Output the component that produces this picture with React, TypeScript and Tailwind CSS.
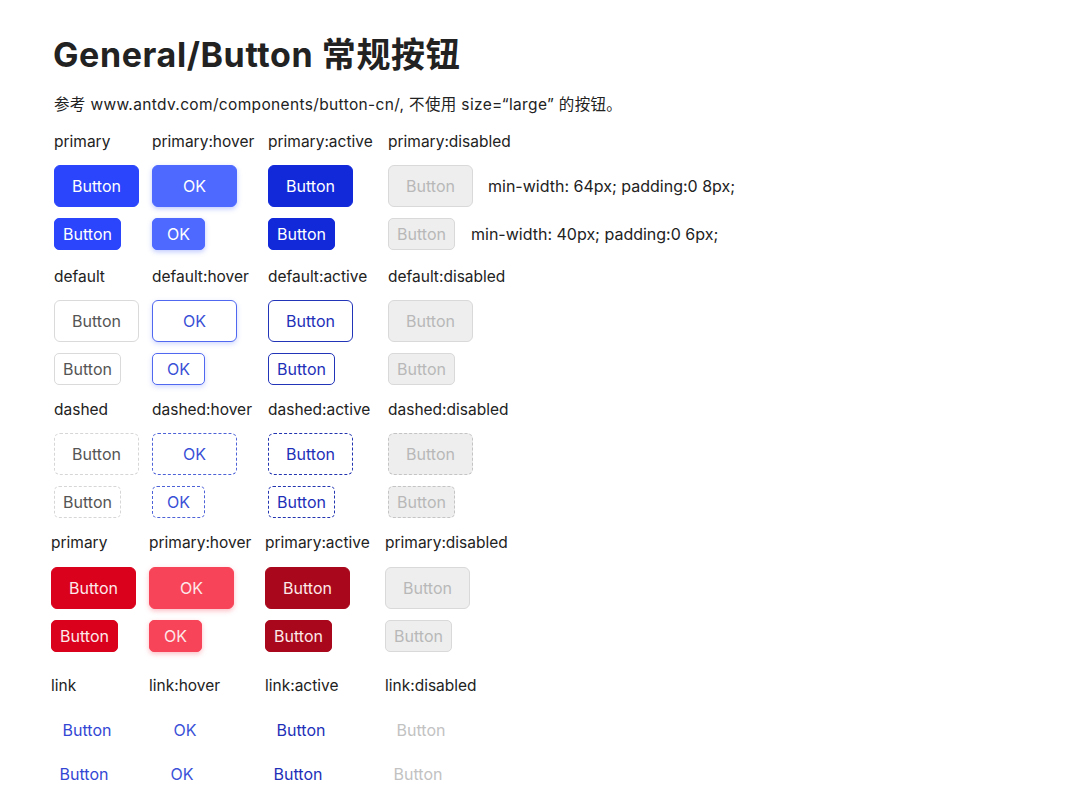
import React from 'react';

type Cell = { text: string; cls: string };

interface Section {
  labels: string[];
  large: Cell[];
  small: Cell[];
  gap: string;
  labelGap: string;
  notes?: boolean;
}

const sections: Section[] = [
  {
    labels: ['primary', 'primary:hover', 'primary:active', 'primary:disabled'],
    large: [
      { text: 'Button', cls: 'bg-[#2a45fb] text-white border border-[#2a45fb]' },
      { text: 'OK', cls: 'bg-[#4d69ff] text-white border border-[#4d69ff] shadow-[0_2px_5px_rgba(77,105,255,0.35)]' },
      { text: 'Button', cls: 'bg-[#1229d9] text-white border border-[#1229d9]' },
      { text: 'Button', cls: 'bg-[#eeeeee] text-[#b8b8b8] border border-[#d9d9d9]' },
    ],
    small: [
      { text: 'Button', cls: 'bg-[#2a45fb] text-white border border-[#2a45fb]' },
      { text: 'OK', cls: 'bg-[#4d69ff] text-white border border-[#4d69ff] shadow-[0_2px_5px_rgba(77,105,255,0.35)]' },
      { text: 'Button', cls: 'bg-[#1229d9] text-white border border-[#1229d9]' },
      { text: 'Button', cls: 'bg-[#eeeeee] text-[#b8b8b8] border border-[#d9d9d9]' },
    ],
    gap: '',
    labelGap: 'mt-[13px]',
    notes: true,
  },
  {
    labels: ['default', 'default:hover', 'default:active', 'default:disabled'],
    large: [
      { text: 'Button', cls: 'bg-white text-[#555] border border-[#dadada]' },
      { text: 'OK', cls: 'bg-white text-[#3a4fd6] border border-[#5068f0] shadow-[0_2px_5px_rgba(77,105,255,0.25)]' },
      { text: 'Button', cls: 'bg-white text-[#1e2fb8] border border-[#2234b8]' },
      { text: 'Button', cls: 'bg-[#eeeeee] text-[#b8b8b8] border border-[#d9d9d9]' },
    ],
    small: [
      { text: 'Button', cls: 'bg-white text-[#555] border border-[#dadada]' },
      { text: 'OK', cls: 'bg-white text-[#3a4fd6] border border-[#5068f0] shadow-[0_2px_5px_rgba(77,105,255,0.25)]' },
      { text: 'Button', cls: 'bg-white text-[#1e2fb8] border border-[#2234b8]' },
      { text: 'Button', cls: 'bg-[#eeeeee] text-[#b8b8b8] border border-[#d9d9d9]' },
    ],
    gap: 'mt-[14px]',
    labelGap: 'mt-[13px]',
  },
  {
    labels: ['dashed', 'dashed:hover', 'dashed:active', 'dashed:disabled'],
    large: [
      { text: 'Button', cls: 'bg-white text-[#555] border border-dashed border-[#d6d6d6]' },
      { text: 'OK', cls: 'bg-white text-[#3a4fd6] border border-dashed border-[#4e62d8]' },
      { text: 'Button', cls: 'bg-white text-[#1e2fb8] border border-dashed border-[#2234b0]' },
      { text: 'Button', cls: 'bg-[#eeeeee] text-[#b8b8b8] border border-dashed border-[#c4c4c4]' },
    ],
    small: [
      { text: 'Button', cls: 'bg-white text-[#555] border border-dashed border-[#d6d6d6]' },
      { text: 'OK', cls: 'bg-white text-[#3a4fd6] border border-dashed border-[#4e62d8]' },
      { text: 'Button', cls: 'bg-white text-[#1e2fb8] border border-dashed border-[#2234b0]' },
      { text: 'Button', cls: 'bg-[#eeeeee] text-[#b8b8b8] border border-dashed border-[#c4c4c4]' },
    ],
    gap: 'mt-[12px]',
    labelGap: 'mt-[13px]',
  },
  {
    labels: ['primary', 'primary:hover', 'primary:active', 'primary:disabled'],
    large: [
      { text: 'Button', cls: 'bg-[#d9011c] text-[#fde8ea] border border-[#d9011c]' },
      { text: 'OK', cls: 'bg-[#f74458] text-[#fde8ea] border border-[#f74458] shadow-[0_2px_5px_rgba(247,68,88,0.35)]' },
      { text: 'Button', cls: 'bg-[#a9081c] text-[#fde8ea] border border-[#a9081c]' },
      { text: 'Button', cls: 'bg-[#eeeeee] text-[#b8b8b8] border border-[#d9d9d9]' },
    ],
    small: [
      { text: 'Button', cls: 'bg-[#d9011c] text-[#fde8ea] border border-[#d9011c]' },
      { text: 'OK', cls: 'bg-[#f74458] text-[#fde8ea] border border-[#f74458] shadow-[0_2px_5px_rgba(247,68,88,0.35)]' },
      { text: 'Button', cls: 'bg-[#a9081c] text-[#fde8ea] border border-[#a9081c]' },
      { text: 'Button', cls: 'bg-[#eeeeee] text-[#b8b8b8] border border-[#d9d9d9]' },
    ],
    // the red block sits 3px further left in the design
    gap: 'mt-[12px] -ml-[3px]',
    labelGap: 'mt-[14px]',
  },
];

const links = [
  { text: 'Button', cls: 'text-[#3347d4]' },
  { text: 'OK', cls: 'text-[#3a52d8]' },
  { text: 'Button', cls: 'text-[#1e2fb8]' },
  { text: 'Button', cls: 'text-[#c2c2c2]' },
];

const cols = 'grid grid-cols-[98px_116px_120px_auto] items-center';

function LabelRow({ labels }: { labels: string[] }) {
  return (
    <div className={`${cols} h-[23px] pt-[1px] text-[15.5px] text-[#222]`}>
      {labels.map((l, i) => (
        <span key={i} className="whitespace-nowrap">{l}</span>
      ))}
    </div>
  );
}

export default function App() {
  return (
    <div className="w-[1067px] h-[800px] bg-white pl-[54px] pt-[32px] overflow-hidden" style={{ fontFamily: 'Inter, "Noto Sans CJK SC", sans-serif' }}>
      <h1 className="text-[34px] leading-[46px] font-bold text-[#222] tracking-[0.6px] -ml-[1px]">
        General/Button 常规按钮
      </h1>
      <p className="mt-[16px] h-[22px] text-[15.5px] leading-[22px] tracking-[0.35px] text-[#222]">
        参考 www.antdv.com/components/button-cn/, 不使用 size=“large” 的按钮。
      </p>

      <div className="mt-[13px]">
        {sections.map((s, si) => (
          <div key={si} className={s.gap}>
            <LabelRow labels={s.labels} />
            <div className={`${cols} ${s.labelGap}`}>
              {s.large.map((c, i) => (
                <div key={i} className="flex items-center">
                  <div className={`h-[42px] w-[85px] rounded-[6px] flex items-center justify-center text-[16px] ${c.cls}`}>
                    {c.text}
                  </div>
                  {s.notes && i === 3 && (
                    <span className="ml-[15px] text-[16px] text-[#222] whitespace-nowrap">min-width: 64px; padding:0 8px;</span>
                  )}
                </div>
              ))}
            </div>
            <div className={`${cols} mt-[11px]`}>
              {s.small.map((c, i) => (
                <div key={i} className="flex items-center">
                  <div className={`h-[32px] ${c.text === 'OK' ? 'w-[53px]' : 'w-[67px]'} rounded-[5px] flex items-center justify-center text-[16px] ${c.cls}`}>
                    {c.text}
                  </div>
                  {s.notes && i === 3 && (
                    <span className="ml-[16px] text-[16px] text-[#222] whitespace-nowrap">min-width: 40px; padding:0 6px;</span>
                  )}
                </div>
              ))}
            </div>
          </div>
        ))}

        <div className="mt-[21px] -ml-[3px]">
          <LabelRow labels={['link', 'link:hover', 'link:active', 'link:disabled']} />
          <div className={`${cols} mt-[13px]`}>
            {links.map((c, i) => (
              <div key={i} className={`h-[42px] min-w-[72px] w-fit px-[10px] flex items-center justify-center text-[16px] ${c.cls}`}>
                {c.text}
              </div>
            ))}
          </div>
          <div className={`${cols} mt-[7px]`}>
            {links.map((c, i) => (
              <div key={i} className={`h-[32px] min-w-[66px] w-fit px-[8px] flex items-center justify-center text-[16px] ${c.cls}`}>
                {c.text}
              </div>
            ))}
          </div>
        </div>
      </div>
    </div>
  );
}
